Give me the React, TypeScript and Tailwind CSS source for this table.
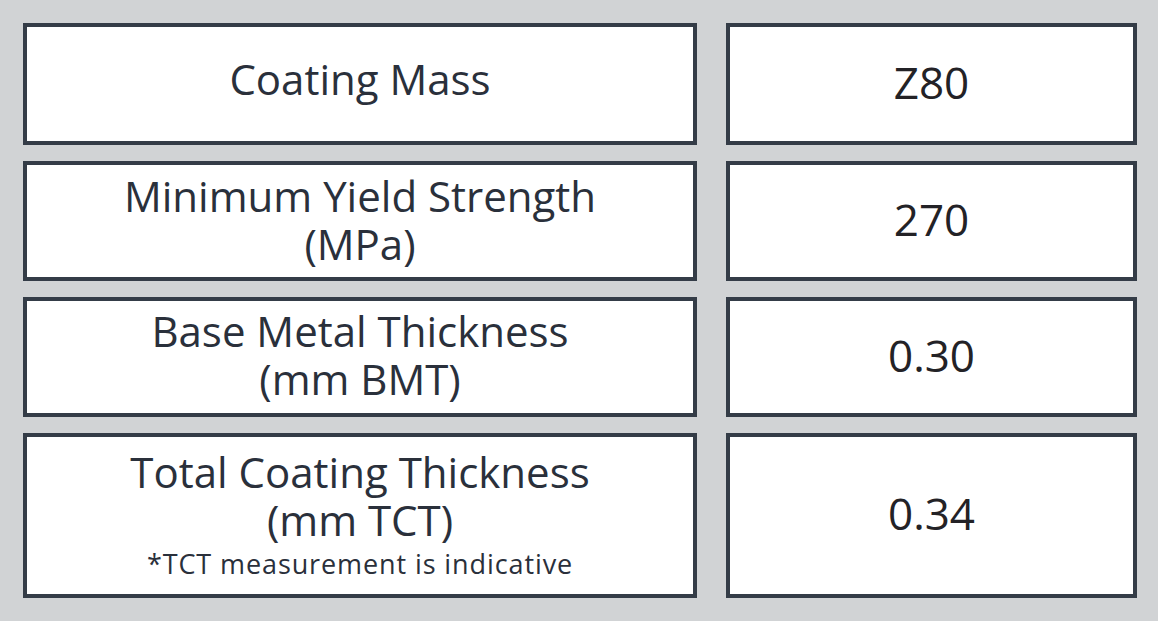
import { Fragment } from 'react';

const rows = [
  { label: ['Coating Mass'], value: 'Z80', shift: 'pb-[10px]' },
  { label: ['Minimum Yield Strength', '(MPa)'], value: '270', shift: 'pb-[2px]' },
  { label: ['Base Metal Thickness', '(mm BMT)'], value: '0.30', shift: 'pb-[4px]' },
  {
    label: ['Total Coating Thickness', '(mm TCT)'],
    value: '0.34',
    shift: 'pb-[4px]',
    note: '*TCT measurement is indicative',
  },
];

export default function App() {
  return (
    <div
      className="w-[1158px] h-[621px] bg-[#d1d3d5] pt-[23px] pl-[23px]"
      style={{ fontFamily: '"Open Sans", "Liberation Sans", sans-serif' }}
    >
      <div className="grid grid-cols-[674px_411px] grid-rows-[122px_120px_120px_165px] gap-x-[29px] gap-y-[16px]">
        {rows.map((row) => (
          <Fragment key={row.value}>
            <div
              className={`flex flex-col items-center justify-center border-4 border-[#343c47] bg-white text-center text-[#2a303b] ${row.shift}`}
            >
              <p className="text-[42px] leading-[48px]">
                {row.label.map((line, i) => (
                  <Fragment key={line}>
                    {i > 0 && <br />}
                    {line}
                  </Fragment>
                ))}
              </p>
              {row.note && (
                <p className="mt-[5px] text-[27px] leading-[30px] tracking-[0.9px]">{row.note}</p>
              )}
            </div>
            <div className="flex items-center justify-center border-4 border-[#343c47] bg-white pb-[5px] text-[44px] text-[#232226]">
              {row.value}
            </div>
          </Fragment>
        ))}
      </div>
    </div>
  );
}
